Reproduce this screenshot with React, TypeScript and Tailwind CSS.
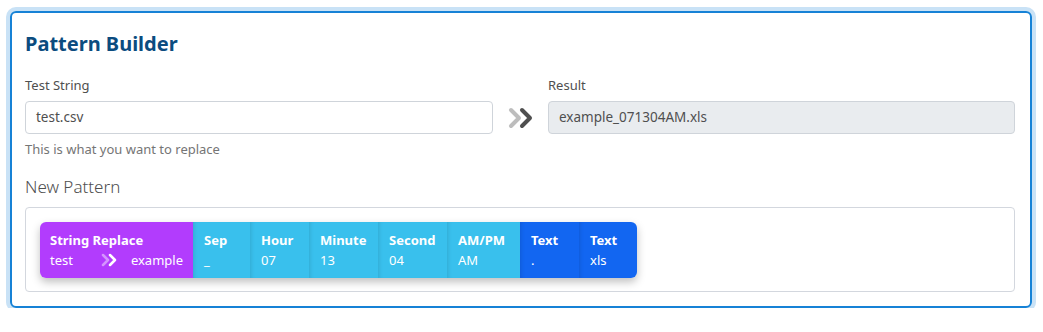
import React from "react";

type Segment = {
  title: string;
  value: string;
  width: string;
  color: string;
};

const segments: Segment[] = [
  { title: "Sep", value: "_", width: "w-[57px]", color: "bg-[#39c0ed]" },
  { title: "Hour", value: "07", width: "w-[59px]", color: "bg-[#39c0ed]" },
  { title: "Minute", value: "13", width: "w-[69px]", color: "bg-[#39c0ed]" },
  { title: "Second", value: "04", width: "w-[69px]", color: "bg-[#39c0ed]" },
  { title: "AM/PM", value: "AM", width: "w-[73px]", color: "bg-[#39c0ed]" },
  { title: "Text", value: ".", width: "w-[59px]", color: "bg-[#1266f1]" },
  { title: "Text", value: "xls", width: "w-[58px]", color: "bg-[#1266f1] rounded-r-[6px]" },
];

const BigChevrons = () => (
  <svg width="28" height="22" viewBox="0 0 28 22" fill="none">
    <polyline points="4,3 12,11 4,19" stroke="#bdbdbd" strokeWidth="4" strokeLinecap="round" strokeLinejoin="round" />
    <polyline points="15,3 23,11 15,19" stroke="#4f4f4f" strokeWidth="4" strokeLinecap="round" strokeLinejoin="round" />
  </svg>
);

const SmallChevrons = () => (
  <svg width="18" height="14" viewBox="0 0 18 14" fill="none">
    <polyline points="3,2 8,7 3,12" stroke="rgba(255,255,255,0.45)" strokeWidth="2.5" strokeLinecap="round" strokeLinejoin="round" />
    <polyline points="10,2 15,7 10,12" stroke="#ffffff" strokeWidth="2.5" strokeLinecap="round" strokeLinejoin="round" />
  </svg>
);

const SegmentItem = ({ seg }: { seg: Segment }) => (
  <div
    className={`${seg.width} ${seg.color} flex flex-col px-[11px] pt-[8px] shadow-[inset_4px_0_4px_-3px_rgba(0,0,0,0.12)]`}
  >
    <span className="text-[13px] font-bold leading-[20px]">{seg.title}</span>
    <span className="text-[13px] leading-[20px]">{seg.value}</span>
  </div>
);

export default function App() {
  return (
    <div
      className="pl-[10px] pt-[11px] bg-white"
      style={{ fontFamily: '"Noto Sans", "Open Sans", sans-serif' }}
    >
      <div className="w-[1022px] h-[297px] rounded-[6px] border-2 border-[#1682d6] ring-4 ring-[#c9e2f6] pl-[13px] pr-[15px] pt-[17px]">
        <h1 className="text-[20px] font-bold leading-[28px] text-[#0b4c7f]">Pattern Builder</h1>

        <div className="grid grid-cols-[468px_55px_1fr] mt-[17px]">
          <div className="flex flex-col">
            <label className="text-[13px] leading-[20px] text-[#4f4f4f]">Test String</label>
            <div className="mt-[6px] h-[33px] rounded-[4px] border border-[#cfd4da] flex items-center px-[10px] text-[13.5px] text-[#4f4f4f]">
              test.csv
            </div>
            <span className="mt-[5px] text-[13px] leading-[20px] text-[#757575]">This is what you want to replace</span>
          </div>
          <div className="flex justify-center pt-[26px]">
            <div className="h-[33px] flex items-center">
              <BigChevrons />
            </div>
          </div>
          <div className="flex flex-col">
            <label className="text-[13px] leading-[20px] text-[#4f4f4f]">Result</label>
            <div className="mt-[6px] h-[33px] rounded-[4px] border border-[#cfd4da] bg-[#e9ecef] flex items-center px-[10px] text-[13.5px] text-[#4f4f4f]">
              example_071304AM.xls
            </div>
          </div>
        </div>

        <h2 className="mt-[16px] text-[17px] leading-[24px] font-light text-[#4f4f4f]">New Pattern</h2>

        <div className="mt-[8px] h-[85px] rounded-[4px] border border-[#d3d7de] pt-[14px] pl-[14px]">
          <div className="flex w-fit h-[56px] rounded-[6px] text-white shadow-[0_4px_8px_rgba(0,0,0,0.25)]">
            <div className="w-[153px] bg-[#b23cfd] rounded-l-[6px] flex flex-col px-[10px] pt-[8px]">
              <span className="text-[13px] font-bold leading-[20px]">String Replace</span>
              <div className="flex items-center justify-between text-[13px] leading-[20px]">
                <span>test</span>
                <span className="pl-[14px] flex items-center">
                  <SmallChevrons />
                </span>
                <span>example</span>
              </div>
            </div>
            {segments.map((s, i) => (
              <SegmentItem key={i} seg={s} />
            ))}
          </div>
        </div>
      </div>
    </div>
  );
}
